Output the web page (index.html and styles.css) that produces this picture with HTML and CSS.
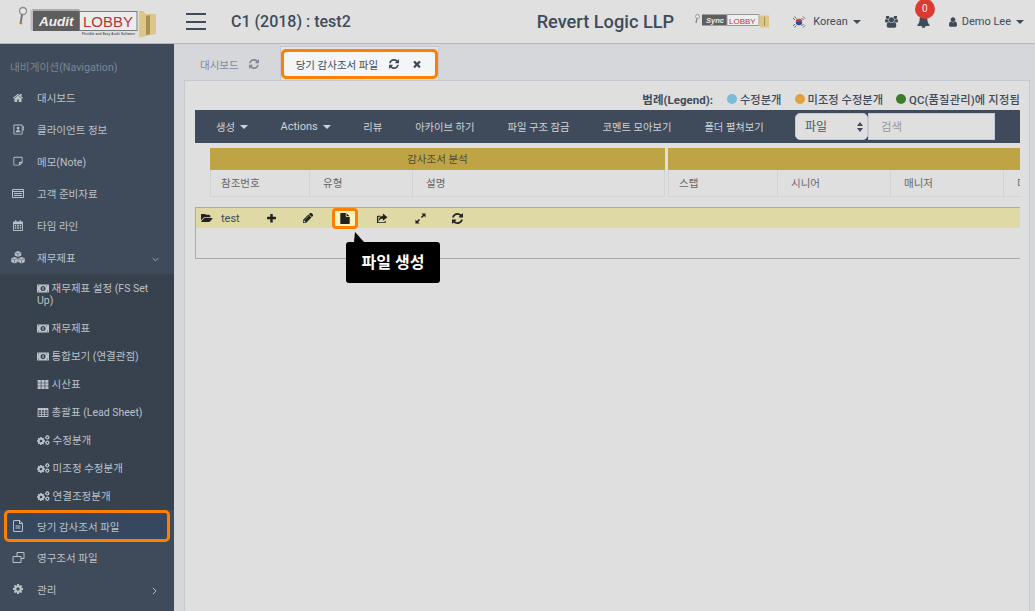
FILE: index.html
```html
<!DOCTYPE html>
<html lang="ko">
<head>
<meta charset="utf-8">
<title>AuditLobby</title>
<link rel="stylesheet" href="styles.css">
</head>
<body>
<svg class="defs" aria-hidden="true">
  <symbol id="refresh" viewBox="128 128 1536 1536"><path d="M1639 1056q0 5-1 7-64 268-268 434.500t-478 166.500q-146 0-282.500-55t-243.500-157l-129 129q-19 19-45 19t-45-19-19-45v-448q0-26 19-45t45-19h448q26 0 45 19t19 45-19 45l-137 137q71 66 161 102t187 36q134 0 250-65t186-179q11-17 53-117 8-23 30-23h192q13 0 22.500 9.500t9.500 22.500zm25-800v448q0 26-19 45t-45 19h-448q-26 0-45-19t-19-45 19-45l138-138q-148-137-349-137-134 0-250 65t-186 179q-11 17-53 117-8 23-30 23h-199q-13 0-22.500-9.500t-9.500-22.500v-7q65-268 270-434.500t480-166.500q146 0 284 55.500t245 156.500l130-129q19-19 45-19t45 19 19 45z"/></symbol>
  <symbol id="plus" viewBox="192 192 1408 1408"><path d="M1600 736v192q0 40-28 68t-68 28h-416v416q0 40-28 68t-68 28h-192q-40 0-68-28t-28-68v-416h-416q-40 0-68-28t-28-68v-192q0-40 28-68t68-28h416v-416q0-40 28-68t68-28h192q40 0 68 28t28 68v416h416q40 0 68 28t28 68z"/></symbol>
  <symbol id="times" viewBox="290 230 1210 1330"><path d="M1490 1322q0 40-28 68l-136 136q-28 28-68 28t-68-28l-294-294-294 294q-28 28-68 28t-68-28l-136-136q-28-28-28-68t28-68l294-294-294-294q-28-28-28-68t28-68l136-136q28-28 68-28t68 28l294 294 294-294q28-28 68-28t68 28l136 136q28 28 28 68t-28 68l-294 294 294 294q28 28 28 68z"/></symbol>
  <symbol id="user" viewBox="256 128 1280 1536"><path d="M1536 1399q0 109-62.500 187t-150.500 78h-854q-88 0-150.500-78t-62.500-187q0-85 8.500-160.500t31.500-152 58.500-131 94-89 134.500-34.500q131 128 313 128t313-128q76 0 134.500 34.500t94 89 58.500 131 31.500 152 8.500 160.500zm-256-887q0 159-112.500 271.500t-271.500 112.500-271.500-112.500-112.500-271.500 112.500-271.500 271.500-112.500 271.500 112.500 112.500 271.500z"/></symbol>
  <symbol id="bell" viewBox="64 64 1664 1728"><path d="M912 1696q0-16-16-16-59 0-101.500-42.500t-42.500-101.500q0-16-16-16t-16 16q0 73 51.500 124.500t124.500 51.500q16 0 16-16zm816-288q0 52-38 90t-90 38h-448q0 106-75 181t-181 75-181-75-75-181h-448q-52 0-90-38t-38-90q50-42 91-88t85-119.500 74.500-158.500 50-206 19.500-260q0-152 117-282.500t307-158.500q-8-19-8-39 0-40 28-68t68-28 68 28 28 68q0 20-8 39 190 28 307 158.500t117 282.500q0 139 19.500 260t50 206 74.500 158.500 85 119.500 91 88z"/></symbol>
  <symbol id="file" viewBox="128 0 1536 1792"><path d="M1152 512v-472q22 14 36 28l408 408q14 14 28 36h-472zm-128 32q0 40 28 68t68 28h544v1056q0 40-28 68t-68 28h-1344q-40 0-68-28t-28-68v-1600q0-40 28-68t68-28h800v544z"/></symbol>
  <symbol id="pencil" viewBox="192 192 1408 1408"><path d="M491 1536l91-91-235-235-91 91v107h128v128h107zm523-928q0-22-22-22-10 0-17 7l-542 542q-7 7-7 17 0 22 22 22 10 0 17-7l542-542q7-7 7-17zm-54-192l416 416-832 832h-416v-416zm683 96q0 53-37 90l-166 166-416-416 166-165q36-38 90-38 53 0 91 38l235 234q37 39 37 91z"/></symbol>
  <symbol id="cog" viewBox="128 128 1536 1536"><path d="M1152 896q0-106-75-181t-181-75-181 75-75 181 75 181 181 75 181-75 75-181zm512-109v222q0 12-8 23t-20 13l-185 28q-19 54-39 91 35 50 107 138 10 12 10 25t-9 23q-27 37-99 108t-94 71q-12 0-26-9l-138-108q-44 23-91 38-16 136-29 186-7 28-36 28h-222q-14 0-24.500-8.500t-11.500-21.500l-28-184q-49-16-90-37l-141 107q-10 9-25 9-14 0-25-11-126-114-165-168-7-10-7-23 0-12 8-23 15-21 51-66.500t54-70.500q-27-50-41-99l-183-27q-13-2-21-12.500t-8-23.500v-222q0-12 8-23t19-13l186-28q14-46 39-92-40-57-107-138-10-12-10-24 0-10 9-23 26-36 98.500-107.500t94.500-71.500q13 0 26 10l138 107q44-23 91-38 16-136 29-186 7-28 36-28h222q14 0 24.500 8.500t11.500 21.500l28 184q49 16 90 37l142-107q9-9 24-9 13 0 25 10 129 119 165 170 7 8 7 22 0 12-8 23-15 21-51 66.500t-54 70.500q26 50 41 98l183 28q13 2 21 12.500t8 23.500z"/></symbol>
  <symbol id="home" viewBox="96 128 1600 1408"><path d="M1472 992v480q0 26-19 45t-45 19h-384v-384h-256v384h-384q-26 0-45-19t-19-45v-480q0-1 .5-3t.5-3l575-474 575 474q1 2 1 6zm223-69l-62 74q-8 9-21 11h-3q-13 0-21-7l-692-577-692 577q-12 8-24 7-13-2-21-11l-62-74q-8-10-7-23.500t11-21.500l719-599q32-26 76-26t76 26l244 204v-195q0-14 9-23t23-9h192q14 0 23 9t9 23v408l219 182q10 8 11 21.500t-7 23.500z"/></symbol>
  <symbol id="folder" viewBox="0 256 1920 1408"><path d="M1845 931q0 35-35 74l-336 396q-43 51-120.500 86.500t-143.500 35.500h-1088q-34 0-60.500-13t-26.500-43q0-35 35-74l336-396q43-51 120.500-86.500t143.500-35.500h1088q34 0 60.500 13t26.500 43zm-343-344v160h-832q-94 0-197 47.500t-164 119.500l-337 396-5 6q0-4-.5-12.500t-.5-12.500v-960q0-92 66-158t158-66h320q92 0 158 66t66 158v32h544q92 0 158 66t66 158z"/></symbol>
  <symbol id="users" viewBox="0 128 1920 1664"><path d="M593 896q-162 5-265 128h-134q-82 0-138-40.500t-56-118.500q0-353 124-353 6 0 43.500 21t97.500 42.500 119 21.500q67 0 133-23-5 37-5 66 0 139 81 256zm1071 637q0 120-73 189.500t-194 69.500h-874q-121 0-194-69.500t-73-189.500q0-53 3.500-103.500t14-109 26.500-108.500 43-97.500 62-81 85.500-53.500 111.500-20q10 0 43 21.500t73 48 107 48 135 21.500 135-21.500 107-48 73-48 43-21.500q61 0 111.500 20t85.500 53.500 62 81 43 97.500 26.500 108.500 14 109 3.500 103.500zm-1024-1277q0 106-75 181t-181 75-181-75-75-181 75-181 181-75 181 75 75 181zm704 384q0 159-112.500 271.500t-271.500 112.500-271.500-112.500-112.500-271.500 112.500-271.500 271.500-112.500 271.500 112.500 112.500 271.500zm576 225q0 78-56 118.500t-138 40.500h-134q-103-123-265-128 81-117 81-256 0-29-5-66 66 23 133 23 59 0 119-21.500t97.500-42.500 43.500-21q124 0 124 353zm-128-609q0 106-75 181t-181 75-181-75-75-181 75-181 181-75 181 75 75 181z"/></symbol>
  <symbol id="share" viewBox="0 0 24 24"><path d="M14 1l10 8-10 8v-4.500c-4 0-7 1-9 5 0-6 3-10.500 9-11.500zM3 6h6v2H4v12h14v-3h2v4a1 1 0 0 1-1 1H3a2 2 0 0 1-2-2V8a2 2 0 0 1 2-2z"/></symbol>
  <symbol id="expand" viewBox="0 0 24 24"><path d="M14 1h9v9l-3.300-3.300-4.400 4.400-2.400-2.400 4.400-4.400zM10 23H1v-9l3.300 3.300 4.400-4.400 2.400 2.400-4.400 4.400z"/></symbol>
  <symbol id="card" viewBox="0 0 24 24"><path fill-rule="evenodd" d="M3 1h16a2 2 0 0 1 2 2v18a2 2 0 0 1-2 2H3a2 2 0 0 1-2-2V3a2 2 0 0 1 2-2zm0 2v18h16V3zm8 3a3 3 0 1 1 0 6 3 3 0 0 1 0-6zm-5 12c0-3.500 2-5 5-5s5 1.500 5 5zM22 5h2v4h-2zm0 5h2v4h-2z"/></symbol>
  <symbol id="note" viewBox="0 0 24 24"><path fill-rule="evenodd" d="M4 2h16a3 3 0 0 1 3 3v11l-7 7H4a3 3 0 0 1-3-3V5a3 3 0 0 1 3-3zm0 2a1 1 0 0 0-1 1v15a1 1 0 0 0 1 1h10v-4a3 3 0 0 1 3-3h4V5a1 1 0 0 0-1-1zm15 13h-2a1 1 0 0 0-1 1v2z"/></symbol>
  <symbol id="keyboard" viewBox="0 0 24 18"><path fill-rule="evenodd" d="M2 0h20a2 2 0 0 1 2 2v14a2 2 0 0 1-2 2H2a2 2 0 0 1-2-2V2a2 2 0 0 1 2-2zm0 2v2h20V2zm0 4v10h20V6zm2 2h16v2H4zm0 4h16v2H4z"/></symbol>
  <symbol id="calendar" viewBox="0 0 22 24"><path fill-rule="evenodd" d="M5 0h2v3h8V0h2v3h3a2 2 0 0 1 2 2v17a2 2 0 0 1-2 2H2a2 2 0 0 1-2-2V5a2 2 0 0 1 2-2h3zM2 9v13h18V9zm2 2h3v3H4zm5 0h4v3H9zm6 0h3v3h-3zm-11 5h3v3H4zm5 0h4v3H9zm6 0h3v3h-3z"/></symbol>
  <symbol id="cubes" viewBox="0 0 26 24"><path d="M13 0l6 2.500v6l-6 2.500-6-2.500v-6zM6.500 11l6 2.500v7l-6 2.500-6-2.500v-7zM19.500 11l6 2.500v7l-6 2.500-6-2.500v-7z"/><path d="M7.500 3l5.500 2.300L18.500 3M13 5.300V11M1 14l5.500 2.300L12 14M6.500 16.300V23M14 14l5.500 2.300L25 14M19.500 16.300V23" fill="none" stroke="#3f4b5b" stroke-width="1"/></symbol>
  <symbol id="money" viewBox="0 0 24 16"><path fill-rule="evenodd" d="M1 0h22a1 1 0 0 1 1 1v14a1 1 0 0 1-1 1H1a1 1 0 0 1-1-1V1a1 1 0 0 1 1-1zm1 2v2a2 2 0 0 0 2-2zm16 0a2 2 0 0 0 2 2V2zM12 3a5 5 0 1 0 0 10 5 5 0 0 0 0-10zM2 12v2h2a2 2 0 0 0-2-2zm18 2h2v-2a2 2 0 0 0-2 2zM11 5h2v6h-2z"/></symbol>
  <symbol id="th" viewBox="0 0 24 20"><path d="M0 0h7v6H0zm8.500 0h7v6h-7zM17 0h7v6h-7zM0 7h7v6H0zm8.500 0h7v6h-7zM17 7h7v6h-7zM0 14h7v6H0zm8.500 0h7v6h-7zm8.500 0h7v6h-7z"/></symbol>
  <symbol id="table" viewBox="0 0 24 20"><path fill-rule="evenodd" d="M1 0h22a1 1 0 0 1 1 1v18a1 1 0 0 1-1 1H1a1 1 0 0 1-1-1V1a1 1 0 0 1 1-1zm1 5v3.500h6V5zm8 0v3.500h4V5zm6 0v3.500h6V5zM2 10v3.500h6V10zm8 0v3.500h4V10zm6 0v3.500h6V10zM2 15v3h6v-3zm8 0v3h4v-3zm6 0v3h6v-3z"/></symbol>
  <symbol id="cogs" viewBox="0 0 26 20"><use href="#cog" x="0" y="4" width="16" height="16"/><use href="#cog" x="16" y="0" width="9.500" height="9.500"/><use href="#cog" x="16" y="10.500" width="9.500" height="9.500"/></symbol>
  <symbol id="filetext" viewBox="0 0 20 24"><path fill-rule="evenodd" d="M3 0h10l7 7v14a3 3 0 0 1-3 3H3a3 3 0 0 1-3-3V3a3 3 0 0 1 3-3zm0 2a1 1 0 0 0-1 1v18a1 1 0 0 0 1 1h14a1 1 0 0 0 1-1V8h-6V2zm11 1v3h3zM5 11h10v2H5zm0 4h10v2H5z"/></symbol>
  <symbol id="clone" viewBox="0 0 24 22"><path fill-rule="evenodd" d="M10 0h12a2 2 0 0 1 2 2v10a2 2 0 0 1-2 2h-4v6a2 2 0 0 1-2 2H2a2 2 0 0 1-2-2V10a2 2 0 0 1 2-2h6V2a2 2 0 0 1 2-2zm0 2v6h6a2 2 0 0 1 2 2v2h4V2zM2 10v10h14V10z"/></symbol>
  <symbol id="angledown" viewBox="0 0 10 6"><path d="M1 1l4 4 4-4" fill="none" stroke="currentColor" stroke-width="1.100"/></symbol>
  <symbol id="angleright" viewBox="0 0 6 10"><path d="M1 1l4 4-4 4" fill="none" stroke="currentColor" stroke-width="1.200"/></symbol>
</svg>

<header class="topbar">
  <div class="brand">
    <svg class="logo" viewBox="0 0 142 36" role="img" aria-label="AuditLobby">
      <circle cx="8" cy="7" r="3.500" fill="#e8e8e8" stroke="#8a8a8a" stroke-width="1.300"/>
      <path d="M7 10.500L5.500 20" stroke="#777" stroke-width="2"/>
      <path d="M5 18l2 2" stroke="#c9852e" stroke-width="2"/>
      <path d="M17 5h47l2 3H18z" fill="#aaa"/>
      <path d="M15.500 5L18 8v19l-2.500-1z" fill="#bdbdbd"/>
      <rect x="18" y="7" width="46" height="20" fill="#5e5e5e"/>
      <rect x="64.500" y="7.500" width="57.500" height="19" fill="#ececec" stroke="#7b7b7b"/>
      <text x="24" y="21.500" class="logo-audit">Audit</text>
      <text x="68" y="23" class="logo-lobby">LOBBY</text>
      <text x="67" y="31" class="logo-tag" textLength="53">Flexible and Easy Audit Software</text>
      <path d="M124 7h5l1 3h11v20l-17 3.500z" fill="#dcc688"/>
      <path d="M131 12l4-1v19l-4 1z" fill="#a58f55"/>
    </svg>
    <button class="burger" type="button" aria-label="menu"><span></span><span></span><span></span></button>
    <h1 class="title">C1 (2018) : test2</h1>
  </div>
  <div class="top-right">
    <div class="company">Revert Logic LLP</div>
    <svg class="sync" viewBox="0 0 76 16" role="img" aria-label="SyncLobby">
      <circle cx="4.500" cy="2.500" r="2" fill="#e8e8e8" stroke="#999"/>
      <path d="M4 4.500L3 9" stroke="#888" stroke-width="1.300"/>
      <rect x="9" y="0.500" width="25" height="11" fill="#5e5e5e"/>
      <rect x="34" y="0.500" width="32" height="11" fill="#eee" stroke="#999"/>
      <text x="13" y="8.500" class="sync-a">Sync</text>
      <text x="36" y="9.500" class="sync-b">LOBBY</text>
      <path d="M67 1.500h9v12h-9z" fill="#dcc688"/>
      <path d="M71 3h1v9h-1z" fill="#a58f55"/>
    </svg>
    <div class="lang">
      <svg class="flag" viewBox="0 0 14 14" aria-hidden="true">
        <path d="M7 3.800a3.200 3.200 0 0 1 3.200 3.200H3.800A3.200 3.200 0 0 1 7 3.800z" fill="#cf3a3a"/>
        <path d="M7 10.200A3.200 3.200 0 0 1 3.800 7h6.400A3.200 3.200 0 0 1 7 10.200z" fill="#2a4a9a"/>
        <path d="M1 3l2 2M2.500 1.500l2 2M11 1.500l2 2M9.500 3l2 2M1 11l2-2M2.500 12.500l2-2M11 12.500l2-2M9.500 11l2-2" stroke="#666" stroke-width="1"/>
      </svg>
      <span>Korean</span><i class="caret"></i>
    </div>
    <svg class="i users-i"><use href="#users"/></svg>
    <div class="bell-wrap">
      <svg class="i bell-i"><use href="#bell"/></svg>
      <span class="badge">0</span>
    </div>
    <div class="me">
      <svg class="i user-i"><use href="#user"/></svg>
      <span>Demo Lee</span><i class="caret"></i>
    </div>
  </div>
</header>

<div class="shell">
  <nav class="sidebar">
    <div class="nav-label">내비게이션(Navigation)</div>
    <a class="nav-item"><svg class="i ni ni-home"><use href="#home"/></svg>대시보드</a>
    <a class="nav-item"><svg class="i ni ni-card"><use href="#card"/></svg>클라이언트 정보</a>
    <a class="nav-item"><svg class="i ni ni-note"><use href="#note"/></svg>메모(Note)</a>
    <a class="nav-item"><svg class="i ni ni-kb"><use href="#keyboard"/></svg>고객 준비자료</a>
    <a class="nav-item"><svg class="i ni ni-cal"><use href="#calendar"/></svg>타임 라인</a>
    <a class="nav-item"><svg class="i ni ni-cubes"><use href="#cubes"/></svg>재무제표<svg class="i chev-d"><use href="#angledown"/></svg></a>
    <div class="submenu">
      <a class="sub-item"><svg class="i si"><use href="#money"/></svg> 재무제표 설정 (FS Set Up)</a>
      <a class="sub-item"><svg class="i si"><use href="#money"/></svg> 재무제표</a>
      <a class="sub-item"><svg class="i si"><use href="#money"/></svg> 통합보기 (연결관점)</a>
      <a class="sub-item"><svg class="i si"><use href="#th"/></svg> 시산표</a>
      <a class="sub-item"><svg class="i si"><use href="#table"/></svg> 총괄표 (Lead Sheet)</a>
      <a class="sub-item"><svg class="i si si-c"><use href="#cogs"/></svg> 수정분개</a>
      <a class="sub-item"><svg class="i si si-c"><use href="#cogs"/></svg> 미조정 수정분개</a>
      <a class="sub-item"><svg class="i si si-c"><use href="#cogs"/></svg> 연결조정분개</a>
    </div>
    <a class="nav-item is-active"><svg class="i ni ni-ft"><use href="#filetext"/></svg>당기 감사조서 파일</a>
    <a class="nav-item"><svg class="i ni ni-clone"><use href="#clone"/></svg>영구조서 파일</a>
    <a class="nav-item"><svg class="i ni ni-cog"><use href="#cog"/></svg>관리<svg class="i chev-r"><use href="#angleright"/></svg></a>
  </nav>

  <main class="main">
    <div class="tabs">
      <div class="tab"><span>대시보드</span><svg class="i tab-i"><use href="#refresh"/></svg></div>
      <div class="tab-frame">
        <div class="tab tab-on"><span>당기 감사조서 파일</span><svg class="i tab-i"><use href="#refresh"/></svg><svg class="i tab-x"><use href="#times"/></svg></div>
      </div>
    </div>

    <section class="panel">
      <div class="legend">
        <strong>범례(Legend):</strong>
        <span class="lg"><i class="dot dot-blue"></i>수정분개</span>
        <span class="lg"><i class="dot dot-orange"></i>미조정 수정분개</span>
        <span class="lg lg-qc"><i class="dot dot-green"></i>QC(품질관리)에 지정됨</span>
      </div>

      <div class="toolbar">
        <a class="tb tb-c">생성<i class="caret"></i></a>
        <a class="tb tb-c tb-latin">Actions<i class="caret"></i></a>
        <a class="tb">리뷰</a>
        <a class="tb">아카이브 하기</a>
        <a class="tb">파일 구조 잠금</a>
        <a class="tb">코멘트 모아보기</a>
        <a class="tb">폴더 펼쳐보기</a>
        <div class="select-wrap">
          <select class="select" aria-label="type"><option>파일</option></select>
          <i class="sel-up"></i><i class="sel-down"></i>
        </div>
        <input class="search" type="text" placeholder="검색">
      </div>

      <div class="grid-head">
        <div class="grp grp-a">
          <div class="grp-title">감사조서 분석</div>
          <div class="cols">
            <div class="col c-ref">참조번호</div>
            <div class="col c-type">유형</div>
            <div class="col c-desc">설명</div>
          </div>
        </div>
        <div class="grp grp-b">
          <div class="grp-title"></div>
          <div class="cols">
            <div class="col c-step">스탭</div>
            <div class="col c-sen">시니어</div>
            <div class="col c-mgr">매니저</div>
            <div class="col c-more">디렉터</div>
          </div>
        </div>
      </div>

      <div class="tree">
        <div class="tree-row">
          <svg class="i tr-folder"><use href="#folder"/></svg>
          <span class="tr-name">test</span>
          <span class="tr-btn tr-plus"><svg class="i"><use href="#plus"/></svg></span>
          <span class="tr-btn tr-pencil"><svg class="i"><use href="#pencil"/></svg></span>
          <span class="tr-btn tr-file"><svg class="i"><use href="#file"/></svg></span>
          <span class="tr-btn tr-share"><svg class="i"><use href="#share"/></svg></span>
          <span class="tr-btn tr-expand"><svg class="i"><use href="#expand"/></svg></span>
          <span class="tr-btn tr-refresh"><svg class="i"><use href="#refresh"/></svg></span>
        </div>
        <div class="tooltip">파일 생성</div>
      </div>
    </section>
  </main>
</div>
</body>
</html>
```
FILE: styles.css
```css
* { box-sizing: border-box; }
html, body { margin: 0; height: 100%; }
body {
  width: 1035px; height: 611px; overflow: hidden;
  font-family: Roboto, "Noto Sans CJK KR", sans-serif;
  font-size: 11px; color: #3f4b5b; background: #d5d7db;
  display: flex; flex-direction: column;
}
a { color: inherit; text-decoration: none; }
.defs { display: none; }
.i { display: block; fill: currentColor; flex: none; }

/* top bar */
.topbar {
  height: 44px; flex: none; display: flex; align-items: center; justify-content: space-between;
  background: #e0e0e0; border-bottom: 1px solid #b4b6b9;
}
.brand { display: flex; align-items: center; }
.logo { width: 142px; height: 36px; margin-left: 15px; }
.logo-audit { font: italic 700 13.500px "Liberation Sans", sans-serif; fill: #f0f0f0; }
.logo-lobby { font: 400 15px "Liberation Sans", sans-serif; fill: #b5343a; }
.logo-tag { font: 700 3px "Liberation Sans", sans-serif; fill: #555; }
.burger {
  width: 20px; height: 17px; margin-left: 29px; padding: 0; border: 0; background: none;
  display: flex; flex-direction: column; justify-content: space-between;
}
.burger span { display: block; height: 2px; background: #3f4b5b; }
.title { margin: 0 0 0 25px; font-size: 16px; font-weight: 500; color: #3f4b5b; line-height: 1; }
.top-right { display: flex; align-items: center; padding-right: 11px; }
.company { font-size: 18.200px; font-weight: 500; }
.sync { width: 76px; height: 16px; margin-left: 19px; }
.sync-a { font: italic 700 7.500px "Liberation Sans", sans-serif; fill: #eee; }
.sync-b { font: 400 8px "Liberation Sans", sans-serif; fill: #b5343a; }
.lang { display: flex; align-items: center; margin-left: 23px; }
.flag { width: 14px; height: 14px; margin-right: 7px; }
.caret {
  display: inline-block; width: 0; height: 0; margin-left: 5px;
  border-left: 4px solid transparent; border-right: 4px solid transparent; border-top: 4px solid currentColor;
}
.users-i { width: 13px; height: 12px; margin-left: 24px; }
.bell-wrap { position: relative; margin-left: 19px; }
.bell-i { width: 13px; height: 13px; }
.badge {
  position: absolute; left: -2px; top: -16px; width: 20px; height: 20px; border-radius: 50%;
  background: #db3b30; color: #eee; font-size: 10px; line-height: 19px; text-align: center;
}
.me { display: flex; align-items: center; margin-left: 19px; }
.user-i { width: 8px; height: 10px; margin-right: 5px; }

/* shell */
.shell { flex: 1; min-height: 0; display: flex; }
.sidebar { width: 174px; flex: none; background: #3f4b5b; color: #bcc1c9; font-size: 10.500px; }
.nav-label { height: 38px; padding: 17px 0 0 10px; color: #7a8695; line-height: 14px; font-size: 10.700px; }
.nav-item { position: relative; display: flex; align-items: center; height: 32px; padding: 0 0 2px 37px; }
.ni { position: absolute; }
.ni-home { left: 13px; width: 10px; height: 9px; }
.ni-card { left: 13px; width: 11px; height: 11px; }
.ni-note { left: 13px; width: 10px; height: 10px; }
.ni-kb { left: 12px; width: 12px; height: 9px; }
.ni-cal { left: 13px; width: 10px; height: 11px; }
.ni-cubes { left: 11px; width: 14px; height: 13px; }
.ni-ft { left: 13px; width: 10px; height: 12px; }
.ni-clone { left: 12px; width: 13px; height: 11px; }
.ni-cog { left: 13px; width: 10px; height: 10px; }
.chev-d { position: absolute; left: 152px; top: 15px; width: 7px; height: 5px; }
.chev-r { position: absolute; left: 152px; top: 13px; width: 5px; height: 8px; }
.submenu { background: #38424f; }
.sub-item {
  display: block; padding: 9px 8px 7px 37px; line-height: 12px; min-height: 28px;
}
.si { display: inline-block; width: 12px; height: 9px; vertical-align: -1px; }
.si-c { width: 13px; height: 10px; }
.is-active {
  margin: 0 4px; padding: 0 0 0 30px; border: 3px solid #ff7f00; border-radius: 5px; background: #364860;
}
.is-active .ni { left: 6px; }

/* main */
.main { flex: 1; min-width: 0; display: flex; flex-direction: column; padding: 0 5px 0 10px; }
.tabs { height: 36px; flex: none; display: flex; align-items: flex-end; }
.tab { display: flex; align-items: center; height: 29px; color: #7e8a99; padding: 0 15px 3px 16px; font-size: 10.500px; }
.tab-i { width: 10px; height: 10px; margin-left: 10px; }
.tab-frame {
  margin-left: 6px; height: 34px; padding: 2px 0 0;
  background: #e2e4e7; border: 1px solid #c5c9cf; border-bottom: 0;
}
.tab-on {
  height: 30px; padding: 0 0 0 12px; width: 157px; color: #3f4b5b;
  background: #f3f5f7; border: 3px solid #ff7f00; border-radius: 5px;
}
.tab-on .tab-i { margin-left: 11px; }
.tab-x { width: 8px; height: 8px; margin-left: 14px; }
.panel {
  flex: 1; min-height: 0; position: relative; background: #dfdfdf;
  border: 1px solid #c5c9cf; border-bottom: 0; padding: 0 9px 0 10px; overflow: hidden;
}
.legend {
  height: 29px; padding-top: 6px; display: flex; justify-content: flex-end; align-items: center;
  font-weight: 500; color: #3f4b5b; font-size: 11.300px;
}
.legend strong { font-weight: 700; margin-right: 14px; font-size: 11.500px; }
.lg { display: flex; align-items: center; margin-right: 13px; }
.lg-qc { margin-right: 0; letter-spacing: .15px; }
.dot { width: 10px; height: 10px; border-radius: 50%; margin-right: 3px; }
.dot-blue { background: #7cbcd9; }
.dot-orange { background: #e0a03f; }
.dot-green { background: #3c7a2c; }

.toolbar {
  height: 33px; display: flex; align-items: center; background: #3f4b5b; color: #d0d4d9; padding-left: 4.500px; font-size: 10.300px;
}
.tb { padding: 0 16.500px; white-space: nowrap; display: flex; align-items: center; }
.tb-c { margin-right: -.500px; }
.tb-latin { font-size: 11px; }
.select-wrap { position: relative; margin-left: auto; flex: none; }
.select {
  display: block; width: 73px; height: 27px; padding-left: 9px;
  appearance: none; -webkit-appearance: none; outline: 0;
  background: #dfdfdf; color: #4b5563; border: 1px solid #c5cbd6; border-radius: 5px;
  font: 400 12px Roboto, "Noto Sans CJK KR", sans-serif;
}
.sel-up, .sel-down { position: absolute; left: 62px; width: 0; height: 0; border-left: 3px solid transparent; border-right: 3px solid transparent; }
.sel-up { top: 9px; border-bottom: 4px solid #3f4b5b; }
.sel-down { top: 15px; border-top: 4px solid #3f4b5b; }
.search {
  flex: none; width: 127px; height: 27px; padding: 0 12px; margin-right: 25px; outline: 0;
  background: #dfdfdf; border: 1px solid #c5cbd6;
  font: 400 11.500px Roboto, "Noto Sans CJK KR", sans-serif; color: #444;
}
.search::placeholder { color: #9a9a9a; }

.grid-head { display: flex; margin: 5px 0 0 15px; gap: 3px; width: 810px; overflow: hidden; font-size: 10.500px; }
.grp { flex: none; }
.grp-a { width: 455px; }
.grp-b { width: 400px; }
.grp-title { height: 22px; background: #bfa445; color: #4e4a3a; text-align: center; line-height: 23px; }
.cols { display: flex; height: 27px; border: 1px solid #d3d3d3; border-top: 0; }
.col { padding-left: 10px; line-height: 28px; color: #666; border-right: 1px solid #d3d3d3; flex: none; }
.c-ref { width: 99px; }
.c-type { width: 103px; padding-left: 13px; }
.c-desc { width: 251px; padding-left: 13px; border-right: 0; }
.c-step { width: 109px; }
.c-sen { width: 113px; padding-left: 13px; }
.c-mgr { width: 113px; padding-left: 13px; }
.c-more { width: 60px; padding-left: 13px; border-right: 0; }

.tree { position: relative; margin-top: 10px; height: 52px; border: 1px solid #aaa; border-right: 0; }
.tree-row { position: relative; height: 20px; background: #dfd9a6; color: #222; display: flex; align-items: center; padding-left: 5px; }
.tr-folder { width: 12px; height: 9px; }
.tr-name { margin-left: 8px; color: #3f4b5b; }
.tr-btn { position: absolute; top: 0; height: 20px; display: flex; align-items: center; justify-content: center; width: 26px; }
.tr-btn .i { width: 10px; height: 10px; }
.tr-plus { left: 62px; }
.tr-plus .i { width: 9px; height: 9px; }
.tr-pencil { left: 99px; }
.tr-file { left: 136px; height: 21px; border: 3px solid #ff7f00; border-radius: 4px; background: #fbf3bd; }
.tr-file .i { width: 10px; height: 11px; }
.tr-share { left: 173px; }
.tr-share .i { width: 12px; height: 11px; }
.tr-expand { left: 211px; }
.tr-expand .i { width: 11px; height: 11px; }
.tr-refresh { left: 248px; }
.tr-refresh .i { width: 11px; height: 11px; }
.tooltip {
  position: absolute; left: 150px; top: 34px; width: 94px; height: 41px; z-index: 2;
  background: #000; color: #fff; border-radius: 3px;
  font-size: 16px; font-weight: 700; line-height: 41px; text-align: center;
}
.tooltip::before {
  content: ""; position: absolute; left: 8px; top: -10px; width: 0; height: 0;
  border-left: 1px solid transparent; border-right: 9px solid transparent; border-bottom: 10px solid #000;
}
```
